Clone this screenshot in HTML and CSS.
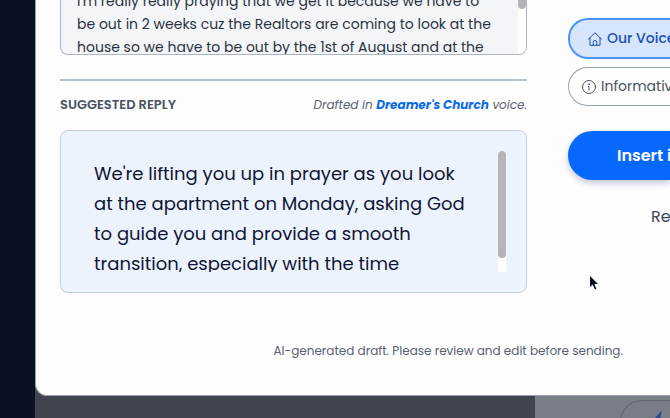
FILE: index.html
```html
<!DOCTYPE html>
<html lang="en">
<head>
    <meta charset="UTF-8">
    <meta name="viewport" content="width=device-width, initial-scale=1.0">
    <title>Suggested Reply</title>

    <link rel="stylesheet" href="styles.css">
</head>
<body>

    <div class="app">
        <div class="rail"></div>

        <div class="stage">
            <!-- Reply dialog -->
            <main class="dialog">
                <div class="columns">
                    <section class="thread">
                        <!-- Original message, scrolled -->
                        <div class="message">
                            <p class="message-text">I'm really really praying that we get it because we have to<br>be out in 2 weeks cuz the Realtors are coming to look at the<br>house so we have to be out by the 1st of August and at the</p>
                            <div class="scrollbar message-scrollbar">
                                <div class="thumb"></div>
                            </div>
                        </div>

                        <hr class="divider">

                        <div class="reply-header">
                            <label class="reply-title" for="reply">SUGGESTED REPLY</label>
                            <span class="reply-voice">Drafted in <strong>Dreamer's Church</strong> voice.</span>
                        </div>

                        <!-- Draft -->
                        <div class="reply-box">
                            <textarea class="reply-text" id="reply" spellcheck="false">We're lifting you up in prayer as you look
at the apartment on Monday, asking God
to guide you and provide a smooth
transition, especially with the time</textarea>
                            <div class="scrollbar">
                                <div class="thumb"></div>
                            </div>
                        </div>
                    </section>

                    <!-- Tone and actions -->
                    <aside class="actions">
                        <button class="tone active" type="button">
                            <svg class="icon" viewBox="0 0 16 16" fill="none" stroke="currentColor" stroke-linejoin="round" stroke-linecap="round">
                                <path d="M1.500 8.200 8 1.800l6.500 6.400M3 7v7.300h10V7M6.200 14.300v-3a1.800 1.800 0 0 1 3.600 0v3"/>
                            </svg>
                            <span>Our Voice</span>
                        </button>
                        <button class="tone" type="button">
                            <svg class="icon" viewBox="0 0 16 16" fill="none" stroke="currentColor" stroke-linecap="round">
                                <circle cx="8" cy="8" r="6.500"/>
                                <path d="M7.300 7.500H8V11"/>
                                <circle cx="8" cy="5.200" r=".3"/>
                            </svg>
                            <span>Informativ</span>
                        </button>
                        <button class="insert" type="button">Insert i</button>
                        <button class="again" type="button">Re</button>
                    </aside>
                </div>

                <p class="note">AI-generated draft. Please review and edit before sending.</p>
            </main>

            <!-- Dimmed page under the dialog -->
            <div class="behind">
                <div class="behind-side">
                    <div class="behind-pill">
                        <svg class="bolt" viewBox="0 0 20 24">
                            <path d="M14 1 3 14h6l-2 9L18 10h-6z" fill="#2c4a94"/>
                        </svg>
                    </div>
                </div>
            </div>
        </div>
    </div>

    <!-- Mouse pointer -->
    <svg class="pointer" viewBox="0 0 12 18">
        <path d="M1.500 1v13l3-2.800 2.200 5 2.400-1-2.200-4.800h4z" fill="#050a1f" stroke="#fff" stroke-width="1"/>
    </svg>

</body>
</html>
```
FILE: styles.css
```css
* {
    box-sizing: border-box;
}

body {
    margin: 0;
    font-family: 'Poppins', 'Inter', sans-serif;
    color: #2b3340;
    background-color: #0a1120;
}

.app {
    display: grid;
    grid-template-columns: 35px minmax(0, 1fr);
    height: 100vh;
    overflow: hidden;
}

.rail {
    background-color: #0a1120;
}

.stage {
    display: flex;
    flex-direction: column;
    background-color: #40444f;
}

/* Dialog */
.dialog {
    padding: 0 0 36px 24px;
    background-color: #fdfdfe;
    border-left: 1px solid #9aa1ac;
    border-bottom: 1px solid #9aa1ac;
    border-bottom-left-radius: 12px;
}

.columns {
    display: grid;
    grid-template-columns: minmax(0, 1fr) 102px;
    gap: 41px;
}

/* Original message */
.message {
    display: flex;
    justify-content: space-between;
    height: 55px;
    padding-left: 16px;
    overflow: hidden;
    background-color: #f3f5f9;
    border: 1px solid #a9b5c4;
    border-top: none;
    border-radius: 0 0 8px 8px;
}

.message-text {
    margin: -10px 0 0;
    font-size: 14px;
    line-height: 23px;
    white-space: nowrap;
}

.scrollbar {
    flex: none;
    width: 8px;
    background-color: #fff;
}

.thumb {
    height: 107px;
    background-color: #b3b5b8;
    border-radius: 4px;
}

.message-scrollbar .thumb {
    height: 9px;
    border-radius: 0 0 4px 4px;
}

.divider {
    height: 2px;
    margin: 24px 0 16px;
    background-color: #b7c1c9;
    border: none;
}

/* Suggested reply */
.reply-header {
    display: flex;
    justify-content: space-between;
    align-items: center;
    margin-bottom: 17px;
    line-height: 16px;
    white-space: nowrap;
}

.reply-title {
    font-size: 13px;
    font-weight: 600;
    color: #4a5260;
}

.reply-voice {
    font-size: 12px;
    font-style: italic;
    color: #5b6370;
}

.reply-voice strong {
    font-weight: 700;
    color: #0a6be8;
}

.reply-box {
    display: flex;
    padding: 20px;
    background-color: #edf3fc;
    border: 1px solid #c3cfdf;
    border-radius: 8px;
}

.reply-text {
    display: block;
    flex: 1;
    min-width: 0;
    height: 121px;
    padding: 8px 0 0 13px;
    overflow: hidden;
    resize: none;
    font-family: inherit;
    font-size: 18px;
    line-height: 30px;
    white-space: pre;
    color: #0f1535;
    background: transparent;
    border: none;
    outline: none;
}

/* Buttons run past the right edge */
.actions {
    display: flex;
    flex-direction: column;
    padding-top: 18px;
}

.actions button {
    overflow: hidden;
    font-family: inherit;
    text-align: left;
    white-space: nowrap;
    cursor: pointer;
}

.tone {
    display: flex;
    align-items: center;
    gap: 4px;
    height: 39px;
    margin-bottom: 8px;
    padding: 0 0 0 12px;
    font-size: 14px;
    color: #4a5260;
    background-color: #fdfdfe;
    border: 1px solid #98a2b0;
    border-right: none;
    border-radius: 20px 0 0 20px;
}

.tone.active {
    height: 41px;
    padding-left: 17px;
    font-weight: 500;
    color: #1a50b4;
    background-color: #d6e4fc;
    border: 2px solid #4b93f2;
    border-right: none;
}

.icon {
    flex: none;
    width: 16px;
    height: 16px;
}

.insert {
    height: 49px;
    margin-top: 17px;
    padding: 0 0 0 49px;
    font-size: 16px;
    font-weight: 600;
    color: #fff;
    background-color: #0668fd;
    border: none;
    border-radius: 25px 0 0 25px;
    box-shadow: 0 3px 6px rgba(10, 40, 90, 0.25);
}

.again {
    height: 40px;
    margin-top: 16px;
    padding: 0 0 0 83px;
    font-size: 16px;
    color: #3d4654;
    background: none;
    border: none;
}

.note {
    margin: 50px 0 0;
    padding-right: 47px;
    font-size: 12px;
    line-height: 16px;
    text-align: right;
    color: #59616d;
}

/* Dimmed page */
.behind {
    display: flex;
    flex: 1;
    justify-content: flex-end;
}

.behind-side {
    width: 135px;
    padding: 4px 0 0 85px;
    background-color: #797d86;
}

.behind-pill {
    height: 44px;
    padding: 8px 0 0 27px;
    border: 1px solid #60656f;
    border-right: none;
    border-radius: 22px 0 0 22px;
}

.bolt {
    display: block;
    width: 20px;
    height: 24px;
}

.pointer {
    position: absolute;
    left: 588px;
    top: 274px;
    width: 12px;
    height: 18px;
}
```
